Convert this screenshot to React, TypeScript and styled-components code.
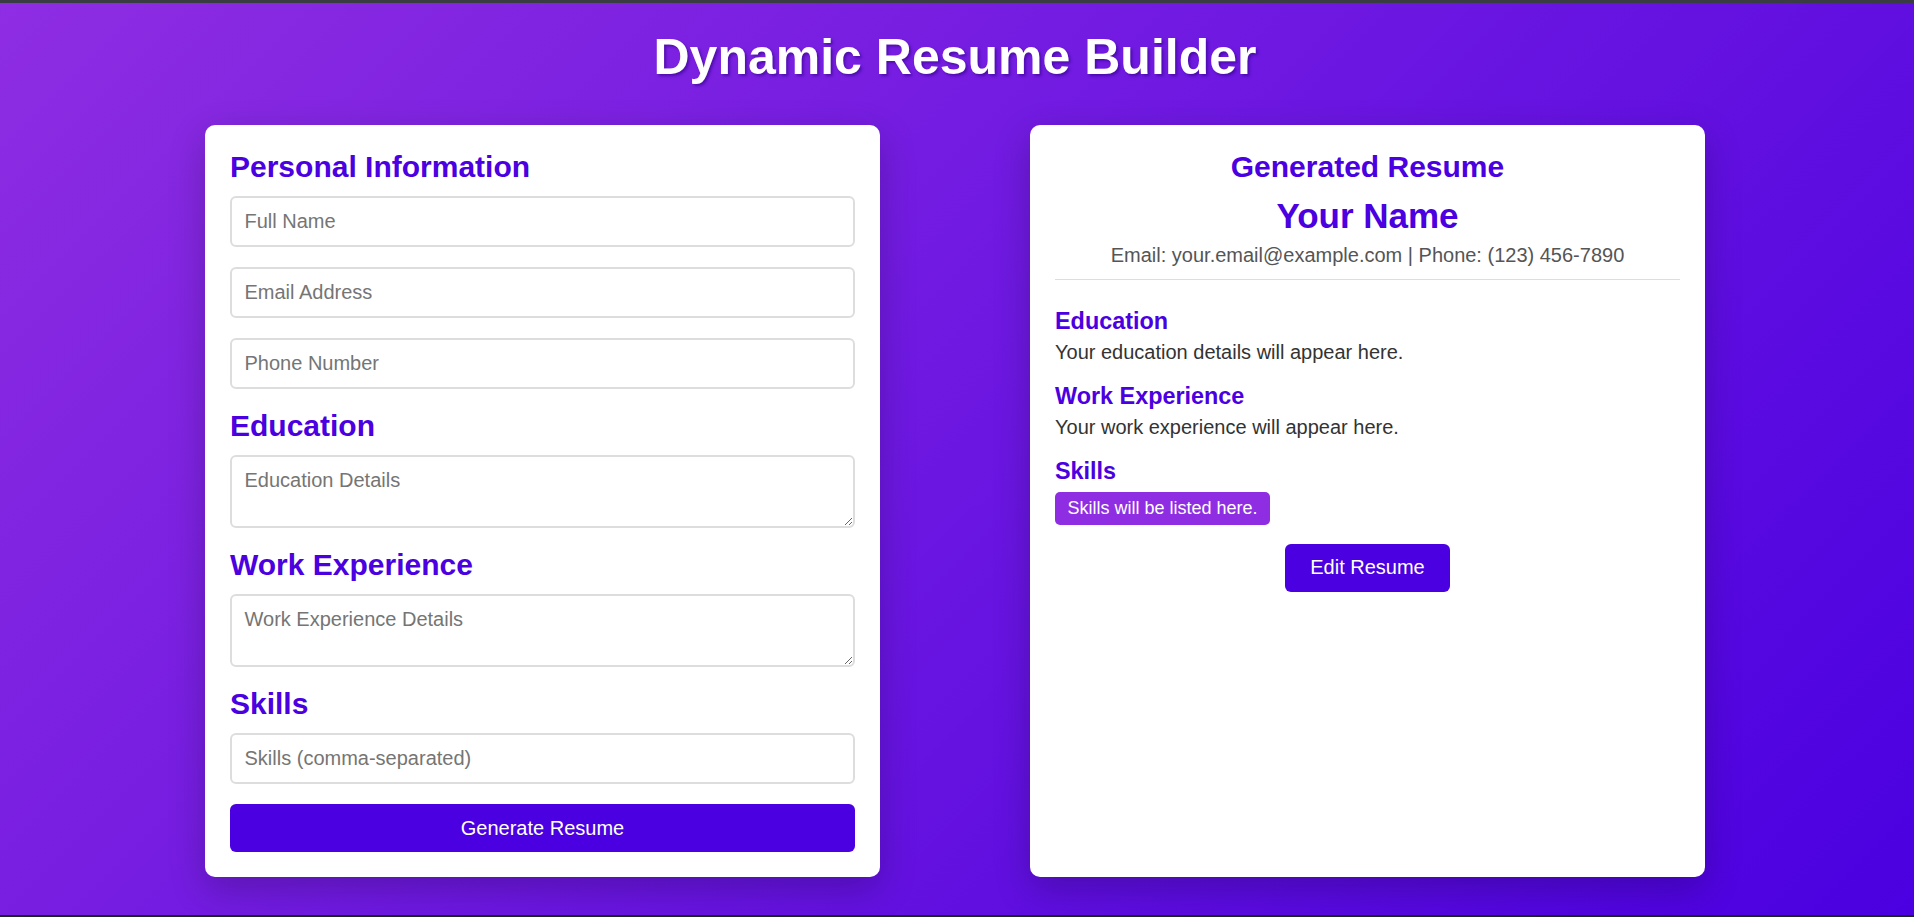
import React from "react";
import styled, { createGlobalStyle } from "styled-components";

const GlobalStyle = createGlobalStyle`
  html, body {
    margin: 0;
    padding: 0;
    height: 100%;
  }
  body {
    font-family: "Liberation Sans", Arial, sans-serif;
    overflow: hidden;
  }
  * { box-sizing: border-box; }
`;

const Page = styled.div`
  height: 100vh;
  border-top: 3px solid #3a3c44;
  border-bottom: 2px solid #1e241f;
  background: linear-gradient(135deg, #8e2de2 0%, #4a00e0 100%);
  padding: 26px 4px 0 0;
  display: flex;
  flex-direction: column;
  align-items: center;
`;

const Title = styled.h1`
  margin: 0 0 38px;
  font-size: 50px;
  line-height: 57.5px;
  font-weight: 700;
  color: #ffffff;
  text-shadow: 2px 2px 3px rgba(50, 0, 140, 0.6);
`;

const Columns = styled.div`
  display: flex;
  align-items: stretch;
  gap: 150px;
  width: 1500px;
`;

const Card = styled.section`
  width: 675px;
  background: #ffffff;
  border-radius: 10px;
  padding: 25px;
  box-shadow: 0 12px 36px rgba(0, 0, 0, 0.22);
`;

const SectionTitle = styled.h2<{ $center?: boolean }>`
  margin: 0 0 11.5px;
  font-size: 30px;
  line-height: 34.5px;
  font-weight: 700;
  color: #4a00e0;
  text-align: ${(p) => (p.$center ? "center" : "left")};
`;

const fieldBase = `
  display: block;
  width: 100%;
  border: 2px solid #dddddd;
  border-radius: 6px;
  font-family: "Liberation Sans", Arial, sans-serif;
  font-size: 20px;
  color: #222;
  background: #fff;
  margin: 0 0 20px;
  outline: none;
  &::placeholder { color: #757575; }
`;

const Input = styled.input`
  ${fieldBase}
  height: 51px;
  padding: 0 12.5px;
`;

const TextArea = styled.textarea`
  ${fieldBase}
  height: 73.3px;
  padding: 12.5px 12.5px;
  line-height: 23px;
  resize: vertical;
`;

const PrimaryButton = styled.button<{ $full?: boolean }>`
  display: ${(p) => (p.$full ? "block" : "inline-block")};
  width: ${(p) => (p.$full ? "100%" : "auto")};
  height: 48px;
  padding: 0 25px;
  border: none;
  border-radius: 6px;
  background: #4a00e0;
  color: #ffffff;
  font-family: "Liberation Sans", Arial, sans-serif;
  font-size: 20px;
  cursor: pointer;
`;

const ResumeHeader = styled.header`
  text-align: center;
  border-bottom: 1px solid #dddddd;
  padding-bottom: 12.5px;
  margin-bottom: 28px;
`;

const Name = styled.h1`
  margin: 0 0 7.75px;
  font-size: 35px;
  line-height: 40.25px;
  font-weight: 700;
  color: #4a00e0;
`;

const Contact = styled.p`
  margin: 0;
  font-size: 20px;
  line-height: 23px;
  color: #555555;
`;

const ResumeSection = styled.div`
  margin-bottom: 18.75px;
`;

const SubTitle = styled.h3`
  margin: 0 0 6.25px;
  font-size: 23.4px;
  line-height: 26.9px;
  font-weight: 700;
  color: #4a00e0;
`;

const Body = styled.p`
  margin: 0;
  font-size: 20px;
  line-height: 23px;
  color: #333333;
`;

const TagList = styled.div`
  display: flex;
  flex-wrap: wrap;
  gap: 6px;
  padding-top: 1px;
`;

const Tag = styled.span`
  display: inline-block;
  background: #8e2de2;
  color: #ffffff;
  font-size: 18px;
  line-height: 20.7px;
  padding: 6.25px 12.5px;
  border-radius: 5px;
`;

const Center = styled.div`
  text-align: center;
`;

export default function App() {
  return (
    <>
      <GlobalStyle />
      <Page>
        <Title>Dynamic Resume Builder</Title>
        <Columns>
          <Card>
            <SectionTitle>Personal Information</SectionTitle>
            <Input placeholder="Full Name" />
            <Input placeholder="Email Address" />
            <Input placeholder="Phone Number" />
            <SectionTitle>Education</SectionTitle>
            <TextArea placeholder="Education Details" />
            <SectionTitle>Work Experience</SectionTitle>
            <TextArea placeholder="Work Experience Details" />
            <SectionTitle>Skills</SectionTitle>
            <Input placeholder="Skills (comma-separated)" />
            <PrimaryButton $full>Generate Resume</PrimaryButton>
          </Card>
          <Card>
            <ResumeHeader>
              <SectionTitle $center>Generated Resume</SectionTitle>
              <Name>Your Name</Name>
              <Contact>Email: your.email@example.com | Phone: (123) 456-7890</Contact>
            </ResumeHeader>
            <ResumeSection>
              <SubTitle>Education</SubTitle>
              <Body>Your education details will appear here.</Body>
            </ResumeSection>
            <ResumeSection>
              <SubTitle>Work Experience</SubTitle>
              <Body>Your work experience will appear here.</Body>
            </ResumeSection>
            <ResumeSection>
              <SubTitle>Skills</SubTitle>
              <TagList>
                <Tag>Skills will be listed here.</Tag>
              </TagList>
            </ResumeSection>
            <Center>
              <PrimaryButton>Edit Resume</PrimaryButton>
            </Center>
          </Card>
        </Columns>
      </Page>
    </>
  );
}
